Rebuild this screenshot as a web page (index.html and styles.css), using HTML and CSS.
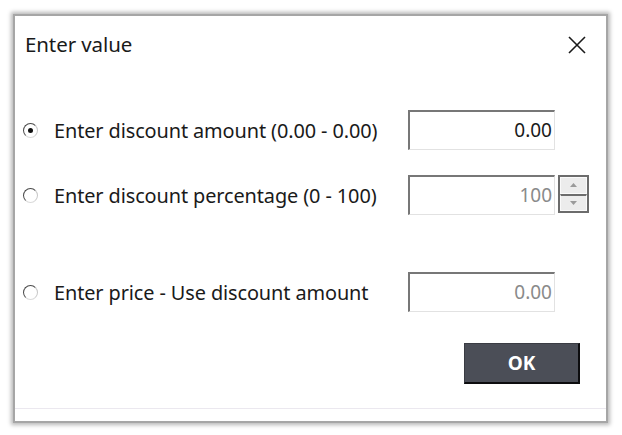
FILE: index.html
```html
<!DOCTYPE html>
<html>
<head>
<meta charset="utf-8">
<link rel="stylesheet" href="styles.css">
</head>
<body>
<div class="dialog">
  <div class="titlebar">
    <span class="title">Enter value</span>
    <svg class="close" width="20" height="20" viewBox="0 0 20 20"><path d="M2 2 L18 18 M18 2 L2 18" stroke="#1a1a1a" stroke-width="1.6" fill="none"/></svg>
  </div>
  <div class="form">
    <div class="row">
      <span class="radio checked"><span class="dot"></span></span>
      <span class="label">Enter discount amount (0.00 - 0.00)</span>
      <div class="input active">0.00</div>
    </div>
    <div class="row">
      <span class="radio"></span>
      <span class="label">Enter discount percentage (0 - 100)</span>
      <div class="input">100</div>
      <div class="spin">
        <div class="spin-btn"><svg width="7" height="4" viewBox="0 0 7 4"><path d="M0 4 L3.5 0 L7 4Z" fill="#9a9a9a"/></svg></div>
        <div class="spin-btn"><svg width="7" height="4" viewBox="0 0 7 4"><path d="M0 0 L3.5 4 L7 0Z" fill="#9a9a9a"/></svg></div>
      </div>
    </div>
    <div class="row row-gap">
      <span class="radio"></span>
      <span class="label">Enter price - Use discount amount</span>
      <div class="input">0.00</div>
    </div>
  </div>
  <div class="actions">
    <button class="ok">OK</button>
  </div>
  <div class="footer"></div>
</div>
</body>
</html>
```

FILE: styles.css
```css
html, body {
  margin: 0;
  padding: 0;
  background: #ffffff;
}
body {
  width: 622px;
  height: 435px;
  overflow: hidden;
  font-family: "Noto Sans", "Open Sans", sans-serif;
  color: #1a1a1a;
}
.dialog {
  margin: 14px 0 0 13px;
  width: 591px;
  height: 405px;
  background: #ffffff;
  border: 2px solid #a6a6a6;
  box-shadow: 0 0 4px 2px rgba(0, 0, 0, 0.28);
  display: flex;
  flex-direction: column;
}
.titlebar {
  height: 56px;
  display: flex;
  align-items: center;
  justify-content: space-between;
  padding: 0 19px 0 10px;
}
.title {
  font-size: 20.5px;
  letter-spacing: -0.1px;
}
.close {
  display: block;
  margin-top: 1px;
}
.form {
  padding-top: 38px;
  padding-left: 8px;
}
.row {
  display: grid;
  grid-template-columns: 31px 354px 147px 34px;
  align-items: center;
  height: 40px;
  margin-bottom: 25px;
}
.row-gap {
  margin-top: 57px;
  margin-bottom: 0;
}
.radio {
  box-sizing: border-box;
  width: 15px;
  height: 15px;
  border-radius: 50%;
  border: 1.5px solid;
  border-color: #4a4a4a #c8c8c8 #dadada #4a4a4a;
  background: #ffffff;
  display: flex;
  align-items: center;
  justify-content: center;
}
.dot {
  width: 5px;
  height: 5px;
  border-radius: 50%;
  background: #111111;
}
.label {
  font-size: 19.9px;
  letter-spacing: -0.1px;
  white-space: nowrap;
}
.input {
  box-sizing: border-box;
  height: 40px;
  border-top: 2px solid #777777;
  border-left: 2px solid #777777;
  border-right: 1px solid #e2e2e2;
  border-bottom: 1px solid #e2e2e2;
  text-align: right;
  padding-right: 2px;
  font-size: 19px;
  line-height: 36px;
  color: #8a8a8a;
}
.input.active {
  color: #1a1a1a;
}
.spin {
  box-sizing: border-box;
  margin-left: 3px;
  width: 31px;
  height: 38px;
  border: 2px solid #6c6c6c;
  display: flex;
  flex-direction: column;
  align-self: start;
}
.spin-btn {
  flex: 1;
  background: #ececec;
  display: flex;
  align-items: center;
  justify-content: center;
  border: 1px solid #fafafa;
}
.spin-btn + .spin-btn {
  border-top: 2px solid #6c6c6c;
}
.actions {
  display: flex;
  justify-content: flex-end;
  padding-right: 26px;
  margin-top: 31px;
}
.ok {
  box-sizing: border-box;
  width: 116px;
  height: 41px;
  background: #4b4e57;
  border: 1px solid #3a3c43;
  border-right: 2px solid #0d0d0f;
  border-bottom: 2px solid #0d0d0f;
  color: #ffffff;
  font-family: "Noto Sans", "Open Sans", sans-serif;
  font-weight: bold;
  font-size: 19px;
  padding: 0;
}
.footer {
  margin-top: auto;
  height: 12px;
  border-top: 1px solid #ebe8ef;
}
```
